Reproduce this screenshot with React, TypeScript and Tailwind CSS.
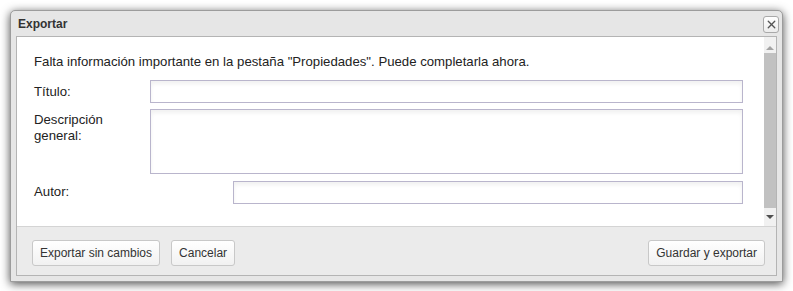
import { X } from "lucide-react"

const inputCls =
  "h-[23px] border border-[#b9b5cc] bg-white shadow-[inset_0_3px_4px_rgba(0,0,0,0.06)]"

const btnCls =
  "h-[26px] px-[7px] rounded-[3px] border border-[#c8c8c8] bg-gradient-to-b from-white to-[#f1f1f1] text-[12px] text-[#333] leading-none"

export default function App() {
  return (
    <div className="w-[793px] h-[291px] bg-white overflow-hidden font-['Liberation_Sans',Arial,sans-serif] pt-[10px] pl-[10px]">
      <div className="w-[773px] h-[272px] flex flex-col rounded-t-[5px] border border-[#9c9c9c] bg-[#e6e6e6] shadow-[0_2px_10px_rgba(0,0,0,0.7)]">
        {/* title bar */}
        <div className="h-[25px] flex items-center justify-between pl-[7px] pr-[3px]">
          <span className="text-[12px] font-bold text-[#333]">Exportar</span>
          <button className="w-[16px] h-[17px] mt-[1px] flex items-center justify-center rounded-[3px] border border-[#a9a9a9] bg-gradient-to-b from-white to-[#ececec]">
            <X className="w-[13px] h-[13px] text-[#555]" strokeWidth={2.5} />
          </button>
        </div>

        {/* body */}
        <div className="mx-[5px] mb-[5px] flex-1 flex flex-col border border-[#b4b4b4]">
          <div className="h-[189px] flex bg-white">
            <div className="flex-1 flex flex-col pl-[17px] pr-[21px] pt-[17px] text-[13.2px] text-[#222]">
              <p className="leading-[16px]">
                Falta información importante en la pestaña "Propiedades". Puede completarla ahora.
              </p>
              <div className="mt-[10px] flex items-center">
                <label className="w-[116px]">Título:</label>
                <input className={`flex-1 ${inputCls}`} />
              </div>
              <div className="mt-[6px] flex items-start">
                <label className="w-[116px] pt-[3px] leading-[16px]">
                  Descripción
                  <br />
                  general:
                </label>
                <textarea className="flex-1 h-[65px] resize-none border border-[#b9b5cc] bg-white shadow-[inset_0_3px_4px_rgba(0,0,0,0.06)]" />
              </div>
              <div className="mt-[7px] flex items-center">
                <label className="w-[199px] -mt-[1px]">Autor:</label>
                <input className={`flex-1 ${inputCls}`} />
              </div>
            </div>
            {/* scrollbar */}
            <div className="w-[12px] flex flex-col items-center bg-[#f1f1f1]">
              <div className="h-[13px] flex items-end justify-center">
                <div className="w-0 h-0 border-l-[4px] border-r-[4px] border-b-[4px] border-l-transparent border-r-transparent border-b-[#a3a3a3]" />
              </div>
              <div className="mt-[3px] w-[12px] h-[155px] bg-[#c1c1c1]" />
              <div className="flex-1 flex items-center justify-center">
                <div className="w-0 h-0 border-l-[4px] border-r-[4px] border-t-[4px] border-l-transparent border-r-transparent border-t-[#505050]" />
              </div>
            </div>
          </div>

          {/* footer */}
          <div className="flex-1 flex items-start justify-between border-t border-[#d4d4d4] bg-[#ebebeb] pt-[13px] pl-[15px] pr-[11px]">
            <div className="flex gap-[11px]">
              <button className={btnCls}>Exportar sin cambios</button>
              <button className={btnCls}>Cancelar</button>
            </div>
            <button className={btnCls}>Guardar y exportar</button>
          </div>
        </div>
      </div>
    </div>
  )
}
